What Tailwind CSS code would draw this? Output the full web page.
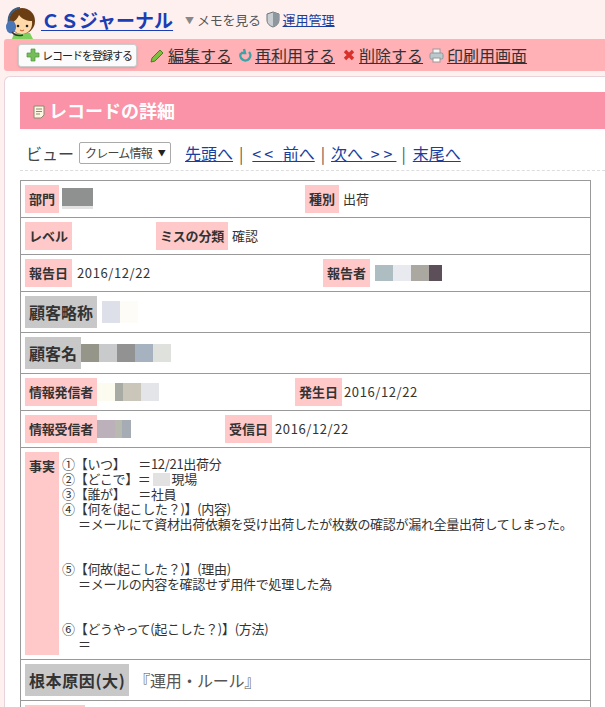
<!DOCTYPE html>
<html lang="ja">
<head>
<meta charset="utf-8">
<title>レコードの詳細</title>
<script src="https://cdn.jsdelivr.net/npm/@tailwindcss/browser@4"></script>
</head>
<body class="h-[707px] overflow-hidden bg-[#fff0f0] text-[13px] text-[#333] font-['Noto_Sans_CJK_JP','Liberation_Sans',sans-serif]">

<!-- app header -->
<div class="flex h-[39px] items-center pl-[5px]">
  <svg class="h-[33px] w-[33px] mt-[5px]" viewBox="0 0 33 33">
    <path d="M9 27h16l3 6H7z" fill="#7ed05c"/>
    <circle cx="17" cy="15" r="13" fill="#6b3d12"/>
    <path d="M7 17c3-2 6-5 7-8 3 4 8 6 13 6 1 8-4 13-10 13S7 24 7 17z" fill="#ffd9a8"/>
    <circle cx="13" cy="20" r="1.3" fill="#222"/><circle cx="22" cy="20" r="1.3" fill="#222"/>
    <path d="M15 24q2 2 4 0" stroke="#c2552d" fill="none"/>
    <path d="M4 18C2 8 9 2 15 2" stroke="#3d5a80" stroke-width="2" fill="none"/>
    <ellipse cx="6" cy="21" rx="5" ry="6.5" fill="#4a76b8"/>
    <path d="M7 26q4 5 11 3" stroke="#333" stroke-width="1.5" fill="none"/>
  </svg>
  <a class="ml-[3px] text-[19px] font-bold leading-[24px] text-[#1a3eb5] underline underline-offset-2">ＣＳジャーナル</a>
  <span class="ml-[12px] mt-[2px] text-[9px] text-[#888]">▼</span>
  <span class="ml-[3px] text-[13px] tracking-[-0.3px] text-[#555]">メモを見る</span>
  <svg class="ml-[5px] h-[17px] w-[14px]" viewBox="0 0 14 17">
    <path d="M7 1l6 2v6c0 4-3 6-6 7-3-1-6-3-6-7V3z" fill="#c9ced3" stroke="#6d7378"/>
    <path d="M7 1l6 2v6c0 4-3 6-6 7z" fill="#8f979e"/>
  </svg>
  <a class="ml-[3px] text-[13px] text-[#1a3e9e] underline">運用管理</a>
</div>

<!-- toolbar -->
<div class="ml-[4px] flex h-[32px] items-center rounded-l-[3px] bg-[#ffb1b6] pl-[14px] text-[16px] text-[#333]">
  <button class="flex h-[23px] w-[119px] items-center rounded-[3px] border border-[#ccc] bg-[#fbfbfb] pl-[7px] text-[11px] tracking-[-1px] text-[#222] shadow-sm">
    <svg class="mr-[2px] h-[14px] w-[14px] shrink-0" viewBox="0 0 14 14"><path d="M5 1h4v4h4v4H9v4H5V9H1V5h4z" fill="#74bd5a" stroke="#4f9a3b" stroke-width=".7"/></svg>レコードを登録する
  </button>
  <svg class="ml-[13px] h-[15px] w-[15px]" viewBox="0 0 15 15"><path d="M2 10l8-8 3 3-8 8-4 1z" fill="#7dbf3f" stroke="#4a7d22"/></svg>
  <a class="ml-[3px] underline">編集する</a>
  <svg class="ml-[6px] h-[14px] w-[14px]" viewBox="0 0 14 14"><path d="M11 4a5 5 0 1 1-8 1M6 1l1 4-4 0" fill="none" stroke="#3aa3a8" stroke-width="2.4"/></svg>
  <a class="ml-[3px] underline">再利用する</a>
  <svg class="ml-[8px] h-[12px] w-[12px]" viewBox="0 0 12 12"><path d="M2 2l8 8M10 2l-8 8" stroke="#d9302a" stroke-width="3.4"/></svg>
  <a class="ml-[4px] underline">削除する</a>
  <svg class="ml-[6px] h-[15px] w-[15px]" viewBox="0 0 15 15"><rect x="4" y="1" width="7" height="5" fill="#f4f4f4" stroke="#999"/><rect x="1" y="5" width="13" height="6" rx="1.5" fill="#b9c9cc" stroke="#8a9a9e"/><rect x="4" y="10" width="7" height="4" fill="#fff" stroke="#999"/></svg>
  <a class="ml-[3px] underline">印刷用画面</a>
</div>

<!-- main panel -->
<div class="ml-[4px] mt-[5px] rounded-tl-[6px] border-l border-t border-[#e9d3da] bg-white pl-[15px] pt-[15px]">
  <div class="flex h-[37px] items-center bg-[#fa93a8] pl-[13px] text-[18px] font-bold text-white">
    <svg class="mr-[4px] mt-[2px] h-[14px] w-[12px]" viewBox="0 0 12 14"><path d="M1 1h10v9l-3 3H1z" fill="#fdf6e3" stroke="#8a8a70"/><path d="M3 4h6M3 6.500h6M3 9h4" stroke="#8a8a70"/></svg>
    レコードの詳細
  </div>

  <div class="flex h-[42px] items-center border-b border-dashed border-[#ddd] pl-[6px] pt-[7px] text-[16px]">
    <span class="text-[#444]">ビュー</span>
    <div class="ml-[5px] flex h-[22px] w-[92px] items-center justify-between rounded-[2px] border border-[#aaa] bg-white pl-[5px] pr-[5px] text-[12px] tracking-[-0.8px] text-[#444]">
      <span>クレーム情報</span><span class="text-[8px] text-[#222]">▼</span>
    </div>
    <a class="ml-[14px] text-[#1a3e9e] underline">先頭へ</a>
    <span class="ml-[6px] mr-[9px] text-[#555]">|</span>
    <a class="text-[#1a3e9e] underline"><span class="tracking-[3px]">&lt;&lt; </span>前へ</a>
    <span class="ml-[6px] mr-[6px] text-[#555]">|</span>
    <a class="text-[#1a3e9e] underline">次へ<span class="tracking-[4px]"> &gt;&gt;</span></a>
    <span class="ml-[5px] mr-[7px] text-[#555]">|</span>
    <a class="text-[#1a3e9e] underline">末尾へ</a>
  </div>

  <!-- record table -->
  <div class="mt-[9px] w-[571px] border-l border-r border-t border-[#999]">
    <div class="flex border-b border-[#999] p-[4px]">
      <div class="flex w-[280px] items-center">
        <span class="flex h-[28px] items-center bg-[#ffc9c9] px-[4px] font-bold">部門</span>
        <span class="ml-[3px] mt-[3px] h-[21px] w-[31px] self-start border-b-[3px] border-[#e2e2e2] bg-[#8f9190]"></span>
      </div>
      <div class="flex items-center">
        <span class="flex h-[28px] items-center bg-[#ffc9c9] px-[4px] font-bold">種別</span>
        <span class="ml-[4px]">出荷</span>
      </div>
    </div>

    <div class="flex border-b border-[#999] p-[4px]">
      <div class="w-[131px]"><span class="flex h-[28px] w-fit items-center bg-[#ffc9c9] px-[4px] font-bold">レベル</span></div>
      <div class="flex items-center">
        <span class="flex h-[28px] items-center bg-[#ffc9c9] px-[4px] font-bold tracking-[-0.2px]">ミスの分類</span>
        <span class="ml-[4px]">確認</span>
      </div>
    </div>

    <div class="flex border-b border-[#999] p-[4px]">
      <div class="flex w-[298px] items-center">
        <span class="flex h-[28px] items-center bg-[#ffc9c9] px-[4px] font-bold">報告日</span>
        <span class="ml-[5px] tracking-[0.6px]">2016/12/22</span>
      </div>
      <div class="flex items-center">
        <span class="flex h-[28px] items-center bg-[#ffc9c9] px-[4px] font-bold">報告者</span>
        <span class="ml-[5px] h-[16px] w-[18px] bg-[#adbdc2]"></span>
        <span class="h-[16px] w-[18px] bg-[#e8eaf0]"></span>
        <span class="h-[16px] w-[18px] bg-[#aaa8a1]"></span>
        <span class="h-[16px] w-[13px] bg-[#5d4f5a]"></span>
      </div>
    </div>

    <div class="flex items-center border-b border-[#999] p-[4px]">
      <span class="flex h-[32px] items-center bg-[#c8c8c8] px-[4px] text-[16px] font-bold">顧客略称</span>
      <span class="ml-[5px] h-[22px] w-[18px] bg-[#dde0e8]"></span>
      <span class="h-[22px] w-[18px] bg-[#fdfcf6]"></span>
    </div>

    <div class="flex items-center border-b border-[#999] p-[4px]">
      <span class="flex h-[32px] items-center bg-[#c8c8c8] px-[4px] text-[16px] font-bold">顧客名</span>
      <span class="h-[18px] w-[18px] bg-[#96958a]"></span>
      <span class="h-[18px] w-[18px] bg-[#c9cacb]"></span>
      <span class="h-[18px] w-[18px] bg-[#929292]"></span>
      <span class="h-[18px] w-[18px] bg-[#a6b2bf]"></span>
      <span class="h-[18px] w-[18px] bg-[#dfe1dd]"></span>
    </div>

    <div class="flex border-b border-[#999] p-[4px]">
      <div class="flex w-[270px] items-center">
        <span class="flex h-[28px] items-center bg-[#ffc9c9] px-[4px] font-bold tracking-[-0.2px]">情報発信者</span>
        <span class="h-[18px] w-[18px] bg-[#fbfbf0]"></span>
        <span class="h-[18px] w-[8px] bg-[#a8aaa4]"></span>
        <span class="h-[18px] w-[18px] bg-[#cbc6ba]"></span>
        <span class="h-[18px] w-[18px] bg-[#e3e5e8]"></span>
      </div>
      <div class="flex items-center">
        <span class="flex h-[28px] items-center bg-[#ffc9c9] px-[4px] font-bold">発生日</span>
        <span class="ml-[2px] tracking-[0.6px]">2016/12/22</span>
      </div>
    </div>

    <div class="flex border-b border-[#999] p-[4px]">
      <div class="flex w-[200px] items-center">
        <span class="flex h-[28px] items-center bg-[#ffc9c9] px-[4px] font-bold tracking-[-0.2px]">情報受信者</span>
        <span class="h-[18px] w-[18px] bg-[#bcb0bb]"></span>
        <span class="h-[18px] w-[7px] bg-[#b8bab0]"></span>
        <span class="h-[18px] w-[9px] bg-[#a5acb3]"></span>
      </div>
      <div class="flex items-center">
        <span class="flex h-[28px] items-center bg-[#ffc9c9] px-[4px] font-bold">受信日</span>
        <span class="ml-[3px] tracking-[0.6px]">2016/12/22</span>
      </div>
    </div>

    <div class="flex border-b border-[#999] p-[4px]">
      <span class="h-[203px] bg-[#ffc9c9] px-[4px] pt-[4px] font-bold leading-[20px]">事実</span>
      <div class="pl-[3px] pt-[5px] leading-[14.9px] tracking-[-0.3px] [text-spacing-trim:space-all]">
        <div>①【いつ】　＝12/21出荷分</div>
        <div class="flex items-center">②【どこで】＝<span class="mx-[2px] h-[13px] w-[17px] bg-[#e2e2e2]"></span>現場</div>
        <div>③【誰が】　＝社員</div>
        <div>④【何を(起こした？)】(内容)</div>
        <div class="pl-[16px]">＝メールにて資材出荷依頼を受け出荷したが枚数の確認が漏れ全量出荷してしまった。</div>
        <div class="h-[30.500px]"></div>
        <div>⑤【何故(起こした？)】(理由)</div>
        <div class="pl-[16px]">＝メールの内容を確認せず用件で処理した為</div>
        <div class="h-[30.500px]"></div>
        <div>⑥【どうやって(起こした？)】(方法)</div>
        <div class="pl-[16px]">＝</div>
      </div>
    </div>

    <div class="flex items-center border-b border-[#999] p-[4px]">
      <span class="flex h-[32px] items-center bg-[#c8c8c8] px-[4px] text-[16px] font-bold tracking-[0.6px]">根本原因(大)</span>
      <span class="ml-[5px] text-[16px] tracking-[-0.3px] text-[#555] [text-spacing-trim:space-all]">『運用・ルール』</span>
    </div>

    <div class="p-[4px]">
      <div class="h-[28px] w-[60px] bg-[#ffc9c9]"></div>
    </div>
  </div>
</div>

</body>
</html>
